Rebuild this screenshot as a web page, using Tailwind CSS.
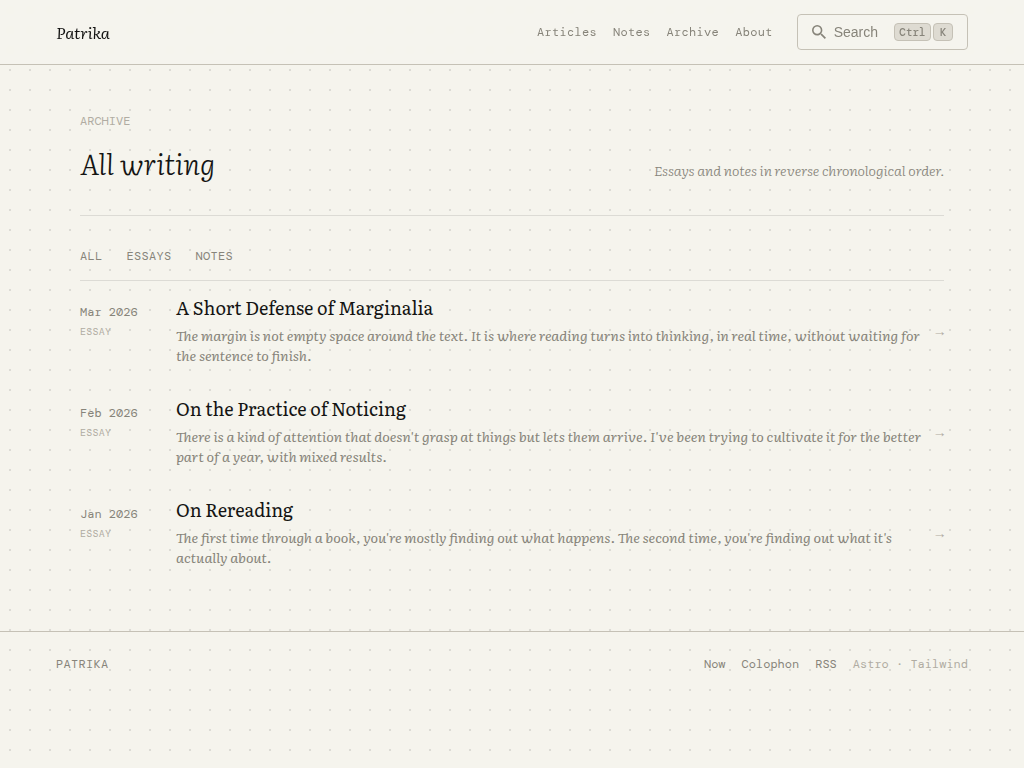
<!DOCTYPE html>
<html lang="en">
<head>
    <meta charset="UTF-8">
    <meta name="viewport" content="width=device-width, initial-scale=1.0">
    <title>Archive - Patrika</title>
    <script src="https://cdn.jsdelivr.net/npm/@tailwindcss/browser@4"></script>
</head>
<body class="min-h-screen bg-[#f5f4ed] bg-[radial-gradient(circle,#dcdbd5_1px,transparent_1px)] bg-size-[20px_20px] font-['Literata','Liberation_Serif',serif] text-[#141413]">
    <header class="sticky top-0 border-b border-[#c5c1b6] bg-[#f5f4ed]/90 backdrop-blur-[2px]">
        <div class="mx-auto flex h-16 max-w-5xl items-center justify-between px-14">
            <a href="#" class="text-base leading-7 italic">Patrika</a>
            <div class="flex items-center gap-6">
                <nav class="flex gap-4 font-['DM_Mono','Liberation_Mono',monospace] text-xs tracking-wide text-[#87847a]">
                    <a href="#">Articles</a>
                    <a href="#">Notes</a>
                    <a href="#">Archive</a>
                    <a href="#">About</a>
                </nav>
                <button type="button" class="flex h-9 items-center rounded border border-[#c5c1b6] px-3.5 font-['Liberation_Sans',sans-serif] text-sm text-[#87847a]">
                    <svg class="mr-2 size-3.5" viewBox="3 3 17.5 17.5" fill="currentColor" aria-hidden="true">
                        <path d="M15.5 14h-.79l-.28-.27A6.47 6.47 0 0 0 16 9.5 6.5 6.5 0 1 0 9.5 16c1.61 0 3.09-.59 4.23-1.57l.27.28v.79l5 4.99L20.49 19l-4.99-5zm-6 0C7.01 14 5 11.99 5 9.5S7.01 5 9.5 5 14 7.01 14 9.5 11.99 14 9.5 14z"/>
                    </svg>
                    <span class="mr-4">Search</span>
                    <span class="flex gap-0.5 font-['DM_Mono','Liberation_Mono',monospace] text-[11px] leading-4 font-medium">
                        <kbd class="min-w-[37px] rounded border border-[#c5c1b6] bg-[#dedbd2] px-1 font-[inherit]">Ctrl</kbd>
                        <kbd class="min-w-5 rounded border border-[#c5c1b6] bg-[#dedbd2] px-1 font-[inherit]">K</kbd>
                    </span>
                </button>
            </div>
        </div>
    </header>

    <main class="mx-auto max-w-4xl px-4 pt-12 pb-[47px]">
        <p class="font-['DM_Mono','Liberation_Mono',monospace] text-xs text-[#b0aca2]">ARCHIVE</p>
        <div class="mt-3.5 flex items-end justify-between border-b border-[#dcdbd5] pb-8">
            <h1 class="text-[28px] leading-10 font-light italic">All writing</h1>
            <p class="text-sm leading-[26px] font-light text-[#87847a] italic">Essays and notes in reverse chronological order.</p>
        </div>

        <div class="mt-8 flex gap-6 border-b border-[#dcdbd5] pb-4 font-['DM_Mono','Liberation_Mono',monospace] text-xs tracking-wide text-[#87847a]">
            <button type="button">ALL</button>
            <button type="button">ESSAYS</button>
            <button type="button">NOTES</button>
        </div>

        <ul>
            <li>
                <a href="#" class="grid grid-cols-[84px_1fr_auto] items-center gap-x-3 pt-[15px] pb-[17px]">
                    <div class="self-start pt-2 font-['DM_Mono','Liberation_Mono',monospace] text-[#87847a]">
                        <p class="text-xs">Mar 2026</p>
                        <p class="mt-1 text-[10px] leading-4 tracking-wide text-[#b0aca2]">ESSAY</p>
                    </div>
                    <div>
                        <h2 class="text-lg leading-6">A Short Defense of Marginalia</h2>
                        <p class="mt-[5px] text-sm leading-5 text-[#87847a] italic">The margin is not empty space around the text. It is where reading turns into thinking, in real time, without waiting for the sentence to finish.</p>
                    </div>
                    <span class="font-['DM_Mono','Liberation_Mono',monospace] text-sm text-[#b0aca2]">→</span>
                </a>
            </li>
            <li>
                <a href="#" class="grid grid-cols-[84px_1fr_auto] items-center gap-x-3 pt-[15px] pb-[17px]">
                    <div class="self-start pt-2 font-['DM_Mono','Liberation_Mono',monospace] text-[#87847a]">
                        <p class="text-xs">Feb 2026</p>
                        <p class="mt-1 text-[10px] leading-4 tracking-wide text-[#b0aca2]">ESSAY</p>
                    </div>
                    <div>
                        <h2 class="text-lg leading-6">On the Practice of Noticing</h2>
                        <p class="mt-[5px] text-sm leading-5 text-[#87847a] italic">There is a kind of attention that doesn't grasp at things but lets them arrive. I've been trying to cultivate it for the better part of a year, with mixed results.</p>
                    </div>
                    <span class="font-['DM_Mono','Liberation_Mono',monospace] text-sm text-[#b0aca2]">→</span>
                </a>
            </li>
            <li>
                <a href="#" class="grid grid-cols-[84px_1fr_auto] items-center gap-x-3 pt-[15px] pb-[17px]">
                    <div class="self-start pt-2 font-['DM_Mono','Liberation_Mono',monospace] text-[#87847a]">
                        <p class="text-xs">Jan 2026</p>
                        <p class="mt-1 text-[10px] leading-4 tracking-wide text-[#b0aca2]">ESSAY</p>
                    </div>
                    <div>
                        <h2 class="text-lg leading-6">On Rereading</h2>
                        <p class="mt-[5px] text-sm leading-5 text-[#87847a] italic">The first time through a book, you're mostly finding out what happens. The second time, you're finding out what it's actually about.</p>
                    </div>
                    <span class="font-['DM_Mono','Liberation_Mono',monospace] text-sm text-[#b0aca2]">→</span>
                </a>
            </li>
        </ul>
    </main>

    <footer class="border-t border-[#c5c1b6]">
        <div class="mx-auto flex max-w-5xl items-center justify-between px-14 py-6 font-['DM_Mono','Liberation_Mono',monospace] text-xs text-[#87847a]">
            <span class="tracking-wide">PATRIKA</span>
            <div class="flex gap-4">
                <a href="#">Now</a>
                <a href="#">Colophon</a>
                <a href="#">RSS</a>
                <span class="text-[#b0aca2]">Astro · Tailwind</span>
            </div>
        </div>
    </footer>
</body>
</html>
